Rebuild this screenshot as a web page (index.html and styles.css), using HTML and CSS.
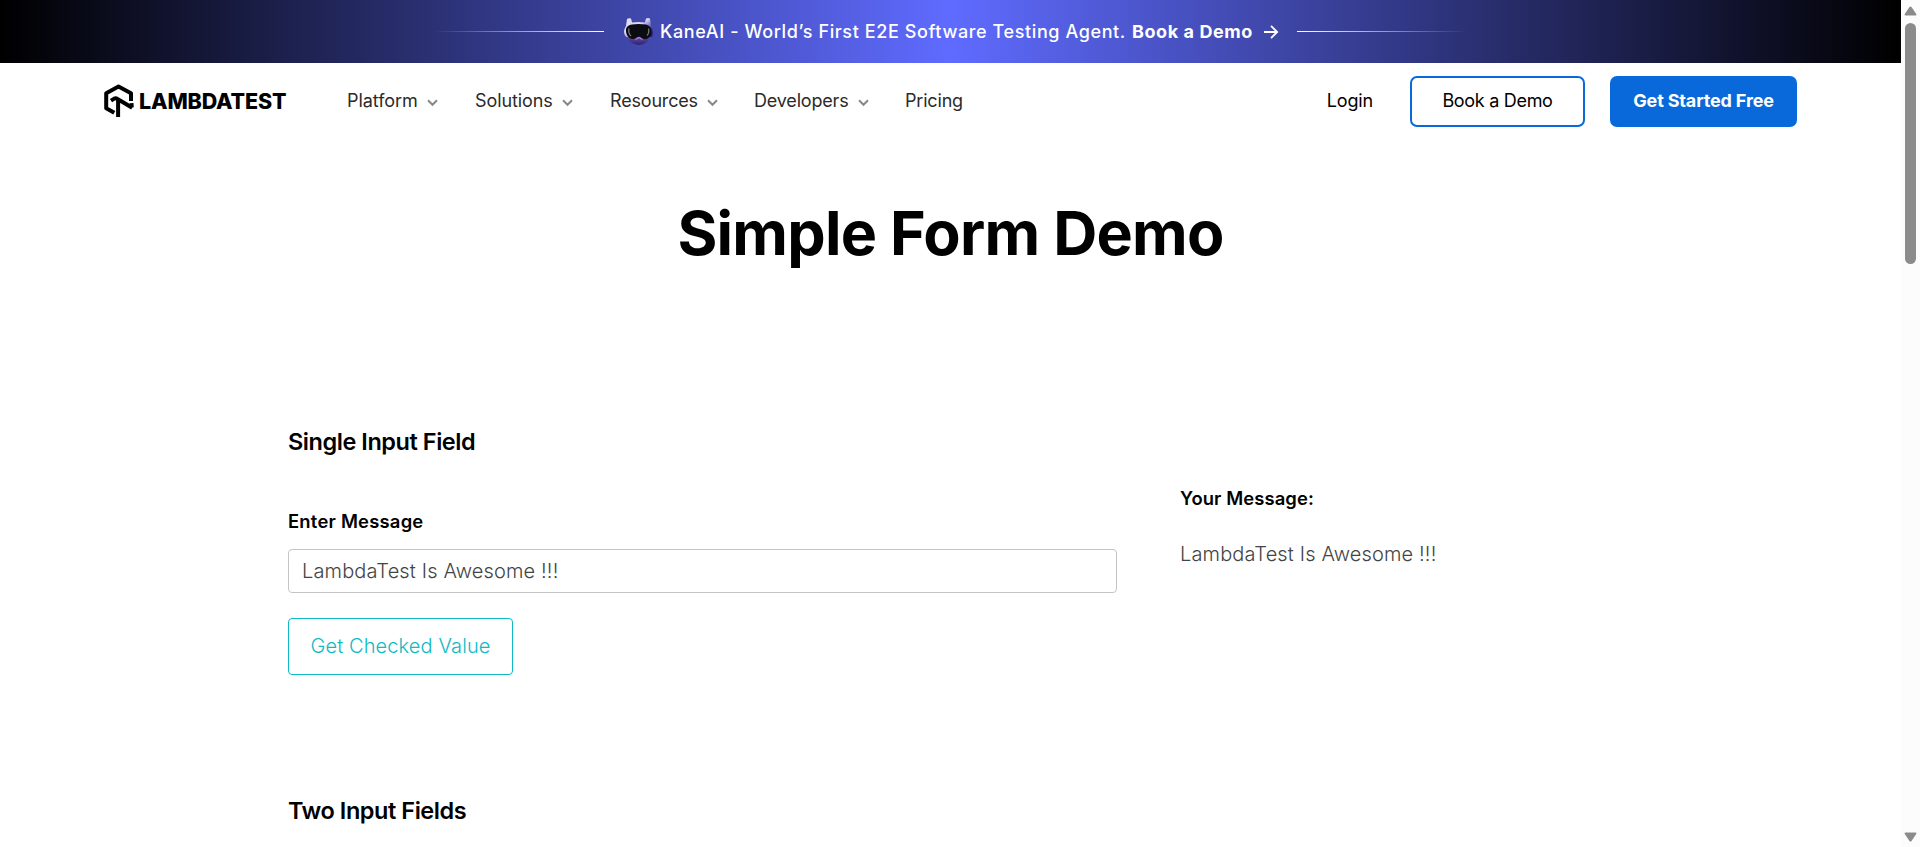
FILE: index.html
```html
<!DOCTYPE html>
<html lang="en">
<head>
<meta charset="utf-8">
<title>Simple Form Demo</title>
<link rel="stylesheet" href="styles.css">
</head>
<body>
<div class="page">
  <div class="banner">
    <span class="line line-left"></span>
    <svg class="robot" width="31" height="29" viewBox="0 0 31 29">
      <defs>
        <linearGradient id="shell" x1="0" y1="0" x2="1" y2="1"><stop offset="0" stop-color="#eadff5"/><stop offset=".45" stop-color="#d5d2f2"/><stop offset=".75" stop-color="#3c2fa8"/><stop offset="1" stop-color="#1b1970"/></linearGradient>
        <linearGradient id="chin" x1="0" y1="0" x2="0" y2="1"><stop offset="0" stop-color="#8a63c4"/><stop offset="1" stop-color="#28206f"/></linearGradient>
      </defs>
      <path d="M1.500 17 Q6 27 16 28 Q26 27 29.500 16Z" fill="url(#chin)"/>
      <path d="M4 2 Q5.500 .8 8 1.500 L9 5.500 Q15 4.500 22 5.500 L23 1.500 Q25 .5 27 1.500 L28 9 Q31.500 15 29 20 L3 20 Q-1 15 3 9Z" fill="url(#shell)"/>
      <path d="M3 12 Q4 8 9 7.500 Q15 6.500 23 7.500 Q28 9 28.500 13 Q29 19 25 21.500 Q21 23 18.500 21 Q15.500 18.500 13 21 Q10 23 6.500 21 Q2.500 18 3 12Z" fill="#0b0b12"/>
      <path d="M6 11.500 Q5 16 8 19 M25.500 11.500 Q26.500 16 24 18.500" stroke="#74747c" stroke-width="1.300" fill="none"/>
      <path d="M12.500 22.500 L16 20.500 L19.500 22.500" stroke="#a583d8" stroke-width="1.300" fill="none"/>
    </svg>
    <span class="promo">KaneAI - World’s First E2E Software Testing Agent.</span>
    <b class="promo-cta">Book a Demo</b>
    <svg class="arrow" width="16" height="14" viewBox="0 0 16 14" fill="none" stroke="#fff" stroke-width="1.800"><path d="M1 7H14M8 .8L14.200 7L8 13.200"/></svg>
    <span class="line line-right"></span>
  </div>
  <header class="header">
    <a class="logo">
      <svg width="30" height="34" viewBox="0 0 30 34" fill="none" stroke="#000" stroke-width="4" stroke-linejoin="round">
        <path d="M27 17V9.200L14.500 2.600L2.200 9.200V24.200L10.300 28.800"/>
        <path d="M7 16.600L10.300 14.600Q11.800 13.900 13.500 15L28.200 23.800M14.100 15.500V33"/>
        <path d="M27.500 19.200L27.800 23.500"/>
      </svg>
      <span class="wordmark">LAMBDATEST</span>
    </a>
    <nav class="nav">
      <a class="item platform">Platform<svg class="chev" width="11" height="8" viewBox="0 0 11 8"><path d="M1 1.300L5.500 5.800L10 1.300"/></svg></a>
      <a class="item solutions">Solutions<svg class="chev" width="11" height="8" viewBox="0 0 11 8"><path d="M1 1.300L5.500 5.800L10 1.300"/></svg></a>
      <a class="item resources">Resources<svg class="chev" width="11" height="8" viewBox="0 0 11 8"><path d="M1 1.300L5.500 5.800L10 1.300"/></svg></a>
      <a class="item developers">Developers<svg class="chev" width="11" height="8" viewBox="0 0 11 8"><path d="M1 1.300L5.500 5.800L10 1.300"/></svg></a>
      <a class="item">Pricing</a>
    </nav>
    <div class="actions">
      <a class="login">Login</a>
      <a class="btn outline">Book a Demo</a>
      <a class="btn solid">Get Started Free</a>
    </div>
  </header>
  <main>
    <h1 class="title">Simple Form Demo</h1>
    <section class="single">
      <div class="form">
        <h2 class="heading">Single Input Field</h2>
        <label class="label" for="message">Enter Message</label>
        <input class="field" id="message" value="LambdaTest Is Awesome !!!">
        <button class="check">Get Checked Value</button>
      </div>
      <div class="result">
        <span class="label result-label">Your Message:</span>
        <p class="output">LambdaTest Is Awesome !!!</p>
      </div>
    </section>
    <h2 class="heading second">Two Input Fields</h2>
  </main>
</div>
<div class="scrollbar">
  <svg width="13" height="10" viewBox="0 0 13 10"><path d="M5.300 1.300Q6.500-.5 7.700 1.300L12.200 8Q12.800 9.600 11.500 9.600H1.500Q.2 9.600 .8 8Z" fill="#8b8b8b"/></svg>
  <div class="thumb"></div>
  <svg class="down" width="13" height="10" viewBox="0 0 13 10"><path d="M5.300 8.700Q6.500 10.500 7.700 8.700L12.200 2Q12.800 .4 11.500 .4H1.500Q.2 .4 .8 2Z" fill="#8b8b8b"/></svg>
</div>
</body>
</html>
```
FILE: styles.css
```css
* { box-sizing: border-box; }
body {
  margin: 0;
  height: 847px;
  display: flex;
  overflow: hidden;
  background: #fff;
  color: #000;
  font-family: Inter, "Liberation Sans", sans-serif;
}
h1, h2, p { margin: 0; }
.page { width: 1901px; height: 847px; overflow: hidden; }
.banner {
  height: 63px;
  padding-left: 435px;
  display: flex;
  align-items: center;
  color: #fff;
  font-size: 18px;
  white-space: nowrap;
  background: linear-gradient(90deg, #000 0%, #5f6bff 50%, #000 100%);
}
.line { width: 169px; height: 1px; flex: none; }
.line-left { background: linear-gradient(90deg, transparent, #fff); }
.line-right { background: linear-gradient(90deg, #fff, transparent); }
.robot { margin-left: 19px; }
.promo { width: 472px; margin-left: 6px; font-weight: 500; letter-spacing: .61px; }
.promo-cta { width: 121px; letter-spacing: .58px; }
.arrow { margin: 0 18px 0 10px; }
.header { height: 76px; display: flex; align-items: center; padding: 0 104px 0 104px; }
.logo { width: 243px; display: flex; align-items: center; gap: 5px; }
.wordmark { padding-bottom: 1px; font-size: 21.5px; font-weight: 800; letter-spacing: -.15px; }
.nav { display: flex; padding-bottom: 2px; color: #2b2b2b; font-size: 18px; }
.item { display: flex; align-items: center; letter-spacing: -.18px; }
.platform { width: 128px; letter-spacing: -.05px; }
.solutions { width: 135px; letter-spacing: -.1px; }
.resources { width: 144px; }
.developers { width: 151px; }
.chev { margin: 5px 0 0 9px; fill: none; stroke: #888; stroke-width: 2; }
.actions { margin-left: auto; display: flex; align-items: center; font-size: 18px; }
.login { margin-right: 37px; padding-bottom: 2px; letter-spacing: -.15px; }
.btn { height: 51px; display: flex; align-items: center; justify-content: center; padding-bottom: 2px; border-radius: 7px; white-space: nowrap; }
.outline { width: 175px; margin-right: 25px; border: 2px solid #0969da; letter-spacing: -.3px; }
.solid { width: 187px; background: #0969da; color: #fff; font-weight: 700; letter-spacing: -.15px; }
.title { margin-top: 54px; height: 80px; line-height: 80px; text-align: center; font-size: 61px; font-weight: 730; letter-spacing: -.75px; }
.single { margin-top: 153px; padding-left: 288px; display: flex; gap: 63px; }
.form { width: 829px; display: flex; flex-direction: column; align-items: flex-start; }
.heading { height: 32px; line-height: 32px; font-size: 23.5px; font-weight: 600; letter-spacing: -.45px; }
.label { margin-top: 51px; height: 24px; line-height: 24px; font-size: 18.4px; font-weight: 600; letter-spacing: .23px; }
.field {
  width: 829px; height: 44px; margin-top: 16px; padding: 0 13px 1px;
  border: 1px solid #c4c4c4; border-radius: 4px;
  color: #444; font: 350 20px Inter, sans-serif; letter-spacing: .15px;
}
.check {
  width: 225px; height: 57px; margin-top: 25px; padding: 0 0 2px;
  border: 1px solid #0ebac5; border-radius: 4px; background: #fff;
  color: #0ebac5; font: 350 20px Inter, sans-serif; letter-spacing: .12px;
}
.result { padding-top: 60px; }
.result-label { display: block; margin-top: 0; letter-spacing: .1px; }
.output { margin-top: 30px; line-height: 28px; font-size: 20px; font-weight: 350; color: #444; letter-spacing: .15px; }
.second { margin: 120px 0 0 288px; }
.scrollbar { width: 19px; background: #fcfcfc; display: flex; flex-direction: column; align-items: center; padding-top: 6px; }
.thumb { width: 11px; height: 241px; margin-top: 7px; border-radius: 6px; background: #8b8b8b; }
.down { margin: auto 0 5px; }
```
